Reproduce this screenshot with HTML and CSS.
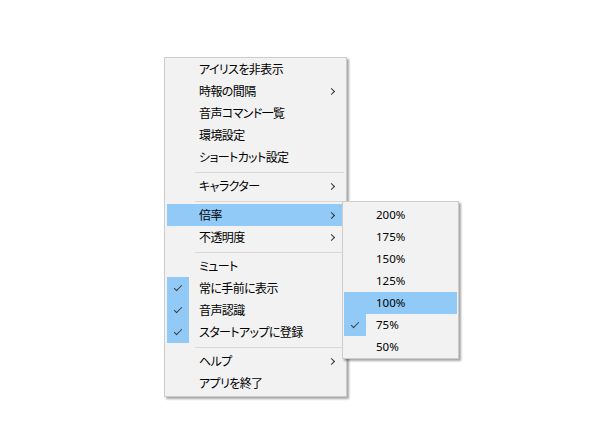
FILE: index.html
```html
<!DOCTYPE html>
<html lang="ja">
    <head>
        <meta charset="UTF-8">
        <title>Menu</title>
        <link rel="stylesheet" href="styles.css">
    </head>

    <body>
        <div class="desk">
            <div class="menu main_menu">
                <div class="item"><span class="chk"></span><span class="label">アイリスを非表示</span></div>
                <div class="item"><span class="chk"></span><span class="label">時報の間隔</span><span class="arrow"></span></div>
                <div class="item"><span class="chk"></span><span class="label">音声コマンド一覧</span></div>
                <div class="item"><span class="chk"></span><span class="label">環境設定</span></div>
                <div class="item"><span class="chk"></span><span class="label">ショートカット設定</span></div>
                <div class="sep"></div>
                <div class="item"><span class="chk"></span><span class="label">キャラクター</span><span class="arrow"></span></div>
                <div class="sep"></div>
                <div class="item hot"><span class="chk"></span><span class="label">倍率</span><span class="arrow"></span></div>
                <div class="item"><span class="chk"></span><span class="label">不透明度</span><span class="arrow"></span></div>
                <div class="sep"></div>
                <div class="item"><span class="chk"></span><span class="label">ミュート</span></div>
                <div class="item"><span class="chk on"></span><span class="label">常に手前に表示</span></div>
                <div class="item"><span class="chk on"></span><span class="label">音声認識</span></div>
                <div class="item"><span class="chk on"></span><span class="label">スタートアップに登録</span></div>
                <div class="sep"></div>
                <div class="item"><span class="chk"></span><span class="label">ヘルプ</span><span class="arrow"></span></div>
                <div class="item"><span class="chk"></span><span class="label">アプリを終了</span></div>
            </div>

            <div class="menu sub_menu">
                <div class="item"><span class="chk"></span><span class="label num">200%</span></div>
                <div class="item"><span class="chk"></span><span class="label num">175%</span></div>
                <div class="item"><span class="chk"></span><span class="label num">150%</span></div>
                <div class="item"><span class="chk"></span><span class="label num">125%</span></div>
                <div class="item hot"><span class="chk"></span><span class="label num">100%</span></div>
                <div class="item"><span class="chk on"></span><span class="label num">75%</span></div>
                <div class="item"><span class="chk"></span><span class="label num">50%</span></div>
            </div>
        </div>
    </body>
</html>
```

FILE: styles.css
```css
body {
    margin: 0;
    background-color: white;
    font-family: "Noto Sans CJK JP", "Noto Sans", sans-serif;
    font-size: 12px;
    color: black;
}
.desk {
    position: relative;
    width: 600px;
    height: 431px;
    overflow: hidden;
}
.menu {
    position: absolute;
    background-color: #f2f2f2;
    border: 1px solid #cccccc;
    box-shadow: 2px 2px 2px rgba(0, 0, 0, 0.35);
    display: flex;
    flex-direction: column;
}
.main_menu {
    left: 164px;
    top: 57px;
    width: 177px;
    padding: 0 2px 2px 2px;
}
.sub_menu {
    left: 342px;
    top: 201px;
    width: 113px;
    padding: 2px 1px 0 1px;
}
.item {
    display: flex;
    align-items: center;
    height: 22px;
    line-height: 22px;
    font-feature-settings: "palt";
}
.hot {
    background-color: #91c9f7;
}
.chk {
    width: 22px;
    height: 22px;
    flex: none;
    display: flex;
    align-items: center;
    justify-content: center;
}
.chk.on {
    background-color: #91c9f7;
}
.chk.on::before {
    content: "";
    width: 7px;
    height: 3px;
    margin-top: -3px;
    border-left: 1.5px solid #3b3b3b;
    border-bottom: 1.5px solid #3b3b3b;
    transform: rotate(-45deg);
}
.label {
    flex: 1;
    margin-left: 10px;
    white-space: nowrap;
    letter-spacing: -0.6px;
}
.num {
    font-family: "Noto Sans", sans-serif;
    font-size: 11.5px;
    letter-spacing: 0;
}
.arrow {
    width: 22px;
    height: 22px;
    flex: none;
    display: flex;
    align-items: center;
    justify-content: center;
}
.arrow::before {
    content: "";
    width: 4px;
    height: 4px;
    margin-left: -3px;
    border-top: 1px solid #333333;
    border-right: 1px solid #333333;
    transform: rotate(45deg);
}
.sep {
    height: 1px;
    margin: 4px 0 2px 28px;
    background-color: #d7d7d7;
}
```
